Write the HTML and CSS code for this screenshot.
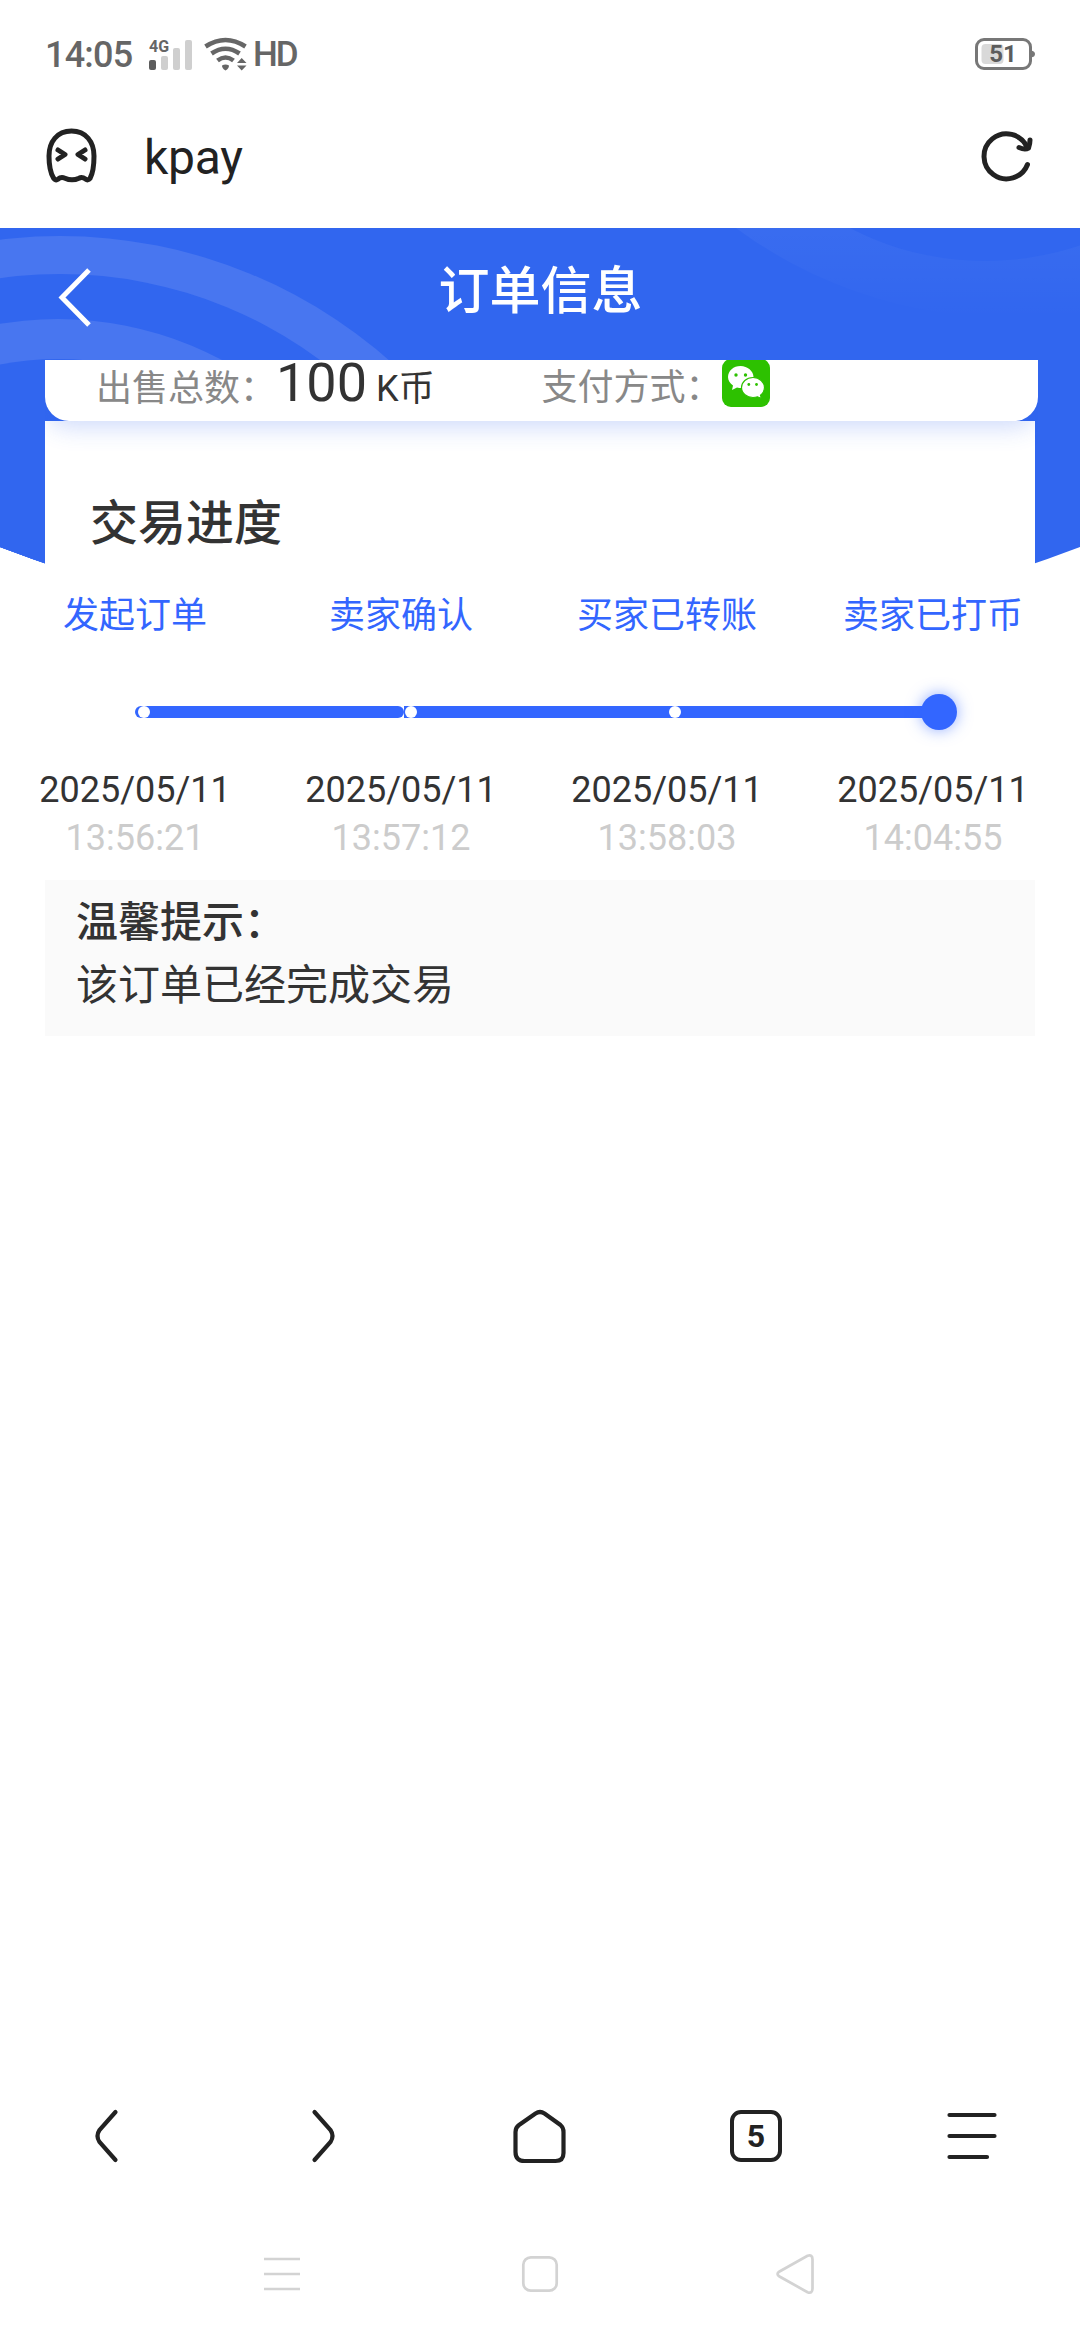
FILE: index.html
```html
<!DOCTYPE html>
<html lang="zh-CN">
<head>
  <meta charset="UTF-8">
  <meta name="viewport" content="width=device-width, initial-scale=1.0">
  <title>订单信息</title>
  <link rel="stylesheet" href="styles.css">
</head>
<body>
  <div class="phone">
    <!-- Status bar -->
    <div class="status-bar">
      <span class="clock">14:05</span>
      <svg class="signal" width="44" height="34" viewBox="0 -2 44 34">
        <text x="0" y="13" class="signal-text">4G</text>
        <rect x="0" y="21" width="7" height="10" rx="2" fill="#5c5c5c"/>
        <rect x="12" y="17" width="7" height="14" rx="2" fill="#cfcfcf"/>
        <rect x="24" y="9" width="7" height="22" rx="2" fill="#cfcfcf"/>
        <rect x="36" y="1" width="7" height="30" rx="2" fill="#cfcfcf"/>
      </svg>
      <svg class="wifi" width="44" height="34" viewBox="0 0 44 34">
        <g fill="none" stroke="#666" stroke-width="4.6">
          <path d="M1.5 9.5Q21.5 -3.500 41.5 9.5"/>
          <path d="M7.500 16.500Q21.500 7 35.500 16.500"/>
          <path d="M13.500 23.500Q21.500 17.500 29.500 23.500"/>
        </g>
        <path d="M18 28.500Q21.500 26.500 25 28.500Q25 31.500 21.500 33.500Q18 31.500 18 28.500Z" fill="#666"/>
        <path d="M33 26L37.700 21L42.500 26ZM33 28.500H42.500L37.700 33.500Z" fill="#666"/>
      </svg>
      <span class="hd">HD</span>
      <svg class="battery" width="60" height="32" viewBox="0 0 60 32">
        <path d="M56 12.500Q60 13 60 16T56 19.500Z" fill="#777"/>
        <rect x="1.500" y="1.500" width="54" height="29" rx="7.500" fill="#fff" stroke="#777" stroke-width="3"/>
        <rect x="6.500" y="6" width="22" height="20" rx="4" fill="#d9d9d9"/>
        <text x="28" y="24.300" text-anchor="middle" class="battery-text">51</text>
      </svg>
    </div>

    <!-- Browser address bar -->
    <div class="address-bar">
      <svg class="ghost" width="52" height="56" viewBox="0 0 52 56" fill="none" stroke="#222" stroke-width="5" stroke-linecap="round" stroke-linejoin="round">
        <path d="M25.500 3C40 3 48 14 48 28C48 38 46.500 46 44 50.500Q42 53 39.500 51Q36 48.500 33 50.200Q26 53.500 19 50.200Q15 48.500 12 51.200Q9.500 53 7.500 50C4.500 45 3 38 3 28C3 14 11 3 25.500 3Z"/>
        <path d="M12 22L19 26.500L12 31M39 22L32 26.500L39 31"/>
      </svg>
      <span class="site-name">kpay</span>
      <svg class="reload" width="52" height="52" viewBox="0 0 52 52" fill="none" stroke="#222" stroke-width="5" stroke-linecap="round" stroke-linejoin="round">
        <path d="M46.500 34.500A22.500 22.500 0 1 1 46 17"/>
        <path d="M38 17.500Q44 20 47.500 18Q49 14 49 10"/>
      </svg>
    </div>

    <!-- Web page -->
    <main class="page">
      <svg class="page-bg" width="1080" height="450" viewBox="0 228 1080 450">
        <defs>
          <linearGradient id="fade" x1="0" y1="0" x2="0" y2="1">
            <stop offset="0.860" stop-color="#fff" stop-opacity="0.060"/>
            <stop offset="1" stop-color="#fff" stop-opacity="0"/>
          </linearGradient>
          <clipPath id="hero">
            <path d="M0 228H1080V547Q540 752 0 547Z"/>
          </clipPath>
        </defs>
        <g clip-path="url(#hero)">
          <rect x="0" y="228" width="1080" height="450" fill="#3166ef"/>
          <circle cx="60" cy="734" r="498" fill="#4876f0"/>
          <circle cx="60" cy="710" r="436" fill="#3166ef"/>
          <circle cx="58" cy="667" r="348" fill="#4876f0"/>
          <circle cx="58" cy="669" r="310" fill="#3166ef"/>
          <circle cx="1010" cy="-144" r="462" fill="url(#fade)"/>
          <circle cx="985" cy="-32" r="293" fill="#3166ef"/>
        </g>
      </svg>

      <header class="page-header">
        <svg class="back" width="36" height="60" viewBox="0 0 36 60" fill="none" stroke="#fff" stroke-width="5">
          <path d="M32 3L5 30.500L32 58"/>
        </svg>
        <h1 class="page-title">订单信息</h1>
      </header>

      <div class="order-card">
        <div class="order-cell">
          <span class="label">出售总数：</span>
          <span class="amount">100</span>
          <span class="unit">K币</span>
        </div>
        <div class="order-cell pay-cell">
          <span class="label">支付方式：</span>
          <svg class="wechat" width="48" height="48" viewBox="0 0 48 48">
            <rect width="48" height="48" rx="9" fill="#2dc100"/>
            <path d="M18.500 7C11.500 7 6 11.800 6 18C6 21.500 8 24.500 11 26.500L10 31L15 28.500Q17 29 20 29C27 29 31.500 24 31.500 18C31.500 12 25.500 7 18.500 7Z" fill="#fff"/>
            <path d="M31 18.500C24.500 18.500 19.500 23 19.500 28.500C19.500 34.500 25 38.500 31 38.500Q33.500 38.500 35.500 37.800L39.500 39.500L38.500 36.200C41 34.300 42.500 31.500 42.500 28.500C42.500 23 37.500 18.500 31 18.500Z" fill="#fff" stroke="#2dc100" stroke-width="1.200"/>
            <g fill="#2dc100">
              <circle cx="14" cy="16" r="1.700"/>
              <circle cx="23.500" cy="16" r="1.700"/>
              <circle cx="26.800" cy="25.500" r="1.400"/>
              <circle cx="34.500" cy="25.500" r="1.400"/>
            </g>
          </svg>
        </div>
      </div>

      <section class="progress-card">
        <h2 class="progress-title">交易进度</h2>

        <div class="steps step-names">
          <span>发起订单</span>
          <span>卖家确认</span>
          <span>买家已转账</span>
          <span>卖家已打币</span>
        </div>
        <div class="track">
          <div class="segment segment-first"><i class="dot"></i></div>
          <div class="segment segment-second"><i class="dot"></i></div>
          <div class="segment segment-third"><i class="dot"></i></div>
          <i class="dot-current"></i>
        </div>
        <div class="steps step-times">
          <div><p class="date">2025/05/11</p><p class="time">13:56:21</p></div>
          <div><p class="date">2025/05/11</p><p class="time">13:57:12</p></div>
          <div><p class="date">2025/05/11</p><p class="time">13:58:03</p></div>
          <div><p class="date">2025/05/11</p><p class="time">14:04:55</p></div>
        </div>
      </section>

      <div class="tips">
        <p class="tips-title">温馨提示：</p>
        <p>该订单已经完成交易</p>
      </div>
    </main>

    <!-- Browser toolbar -->
    <nav class="toolbar">
      <svg width="60" height="60" viewBox="0 0 60 60">
        <path d="M37.500 6L21.500 24Q17.500 30 21.500 36L37.500 54"/>
      </svg>
      <svg width="60" height="60" viewBox="0 0 60 60">
        <path d="M20.500 6L36.500 24Q40.500 30 36.500 36L20.500 54"/>
      </svg>
      <svg width="60" height="60" viewBox="0 0 60 60">
        <path d="M25.500 7.500Q30 4.500 34.500 7.500L50.500 19Q53.500 21.500 53.500 26V47Q53.500 55 45.500 55H14.500Q5.500 55 5.500 46V26Q5.500 21.500 9 19Z"/>
      </svg>
      <div class="tabs">5</div>
      <svg width="60" height="60" viewBox="0 0 60 60">
        <path d="M7.500 9H52.500M7.500 30H52.500M7.500 51H45"/>
      </svg>
    </nav>

    <!-- System navigation -->
    <nav class="system-nav">
      <svg width="44" height="44" viewBox="0 0 44 44">
        <path d="M4 7H40M4 22H40M4 37H40"/>
      </svg>
      <svg width="44" height="44" viewBox="0 0 44 44">
        <rect x="5.300" y="5.300" width="33.400" height="33.400" rx="7.500"/>
      </svg>
      <svg width="44" height="44" viewBox="0 0 44 44">
        <path d="M3.500 19.500L31.500 3.800Q36.500 2 36.500 7.500V36.500Q36.500 42 31.500 40.200L3.500 24.500Q-0.500 22 3.500 19.500Z"/>
      </svg>
    </nav>
  </div>
</body>
</html>
```
FILE: styles.css
```css
* {
  margin: 0;
  padding: 0;
  box-sizing: border-box;
}

body {
  font-family: Roboto, 'Noto Sans CJK SC', sans-serif;
  background-color: #fff;
  color: #333;
}

svg {
  display: block;
  flex-shrink: 0;
}

.phone {
  width: 1080px;
  height: 2340px;
  display: flex;
  flex-direction: column;
  overflow: hidden;
}

/* status bar */
.status-bar {
  height: 108px;
  padding: 0 45px;
  display: flex;
  align-items: center;
  color: #666;
}

.clock {
  width: 104px;
  padding-top: 2px;
  font-size: 36px;
  font-weight: 500;
  letter-spacing: -0.8px;
  line-height: 44px;
}

.signal {
  overflow: visible;
}

.signal-text {
  font-size: 16px;
  font-weight: bold;
  fill: #666;
}

.wifi {
  margin-left: 11px;
}

.hd {
  margin-left: 5px;
  padding-top: 2px;
  font-size: 35px;
  font-weight: 500;
  letter-spacing: -2px;
  line-height: 44px;
}

.battery {
  margin-left: auto;
}

.battery-text {
  font-size: 24px;
  font-weight: bold;
  fill: #5c5c5c;
}

/* address bar */
.address-bar {
  height: 120px;
  padding: 0 47px 24px 46px;
  display: flex;
  align-items: center;
  color: #222;
}

.site-name {
  margin-left: 46px;
  padding-top: 3px;
  font-size: 48px;
  letter-spacing: -0.3px;
  line-height: 56px;
}

.reload {
  margin-left: auto;
}

/* web page */
.page {
  position: relative;
  flex: 1;
}

.page-bg {
  position: absolute;
  top: 0;
  left: 0;
  z-index: -1;
}

.page-header {
  height: 132px;
  padding: 0 57px;
  display: flex;
  align-items: center;
}

.back {
  margin-top: 5px;
}

.page-title {
  flex: 1;
  margin-right: 35px;
  padding-bottom: 4px;
  font-size: 51px;
  font-weight: 500;
  line-height: 72px;
  text-align: center;
  color: #fff;
}

.order-card {
  position: relative;
  width: 993px;
  height: 61px;
  margin-left: 45px;
  padding: 0 51px;
  display: flex;
  background-color: #fff;
  border-radius: 0 0 24px 24px;
  box-shadow: 0 6px 24px rgba(51, 102, 239, 0.24);
  clip-path: inset(0 0 -40px 0);
}

.order-cell {
  width: 447px;
  height: 48px;
  margin-top: -5px;
  display: flex;
  align-items: baseline;
  white-space: nowrap;
  line-height: 56px;
}

.pay-cell {
  margin-top: 0;
}

.label {
  width: 180px;
  font-size: 36px;
  color: #888;
}

.amount {
  font-size: 54px;
}

.unit {
  margin-left: 9px;
  font-size: 36px;
}

.wechat {
  align-self: flex-start;
  margin-top: -1px;
}

/* progress */
.progress-card {
  margin: 0 45px;
  padding: 67px 45px 0;
  background-color: #fff;
}

.progress-title {
  font-size: 48px;
  font-weight: 500;
  line-height: 72px;
}

/* the steps are wider than the card */
.steps {
  width: 1064px;
  margin-left: -88px;
  display: grid;
  grid-template-columns: repeat(4, 1fr);
  text-align: center;
  font-size: 36px;
}

.step-names {
  margin-top: 29px;
  line-height: 54px;
  color: #3366ff;
}

.track {
  width: 804px;
  height: 36px;
  margin: 51px 0 0 45px;
  display: flex;
  align-items: center;
}

.segment {
  height: 12px;
  background-color: #3366ff;
}

.segment-first {
  width: 269px;
  padding-left: 3px;
  border-radius: 6px;
}

.segment-second {
  width: 266px;
  padding-left: 1px;
}

.segment-third {
  width: 269px;
}

.dot {
  display: block;
  width: 12px;
  height: 12px;
  border-radius: 50%;
  background-color: #fff;
}

.segment-third .dot {
  margin-left: -1px;
}

.dot-current {
  flex-shrink: 0;
  width: 36px;
  height: 36px;
  margin: 0 -18px;
  border-radius: 50%;
  background-color: #3366ff;
  box-shadow: 0 0 15px rgba(51, 102, 255, 0.55);
}

.step-times {
  margin-top: 36px;
  line-height: 48px;
}

.time {
  color: #ccc;
}

.tips {
  height: 156px;
  margin: 18px 45px 0;
  padding: 11px 31px;
  background-color: #fafafa;
  font-size: 42px;
  line-height: 63px;
}

.tips-title {
  font-weight: 500;
}

/* browser toolbar */
.toolbar {
  height: 144px;
  display: grid;
  grid-template-columns: repeat(5, 1fr);
  align-items: center;
  justify-items: center;
}

.toolbar svg {
  fill: none;
  stroke: #222;
  stroke-width: 4.2;
  stroke-linecap: round;
}

.tabs {
  width: 52px;
  height: 52px;
  border: 4px solid #222;
  border-radius: 11px;
  font-size: 32px;
  font-weight: bold;
  line-height: 44px;
  text-align: center;
  color: #222;
}

/* system navigation */
.system-nav {
  height: 132px;
  padding: 0 153px;
  display: grid;
  grid-template-columns: repeat(3, 1fr);
  align-items: center;
  justify-items: center;
}

.system-nav svg {
  fill: none;
  stroke: #d3d3d3;
  stroke-width: 2.7;
}
```
